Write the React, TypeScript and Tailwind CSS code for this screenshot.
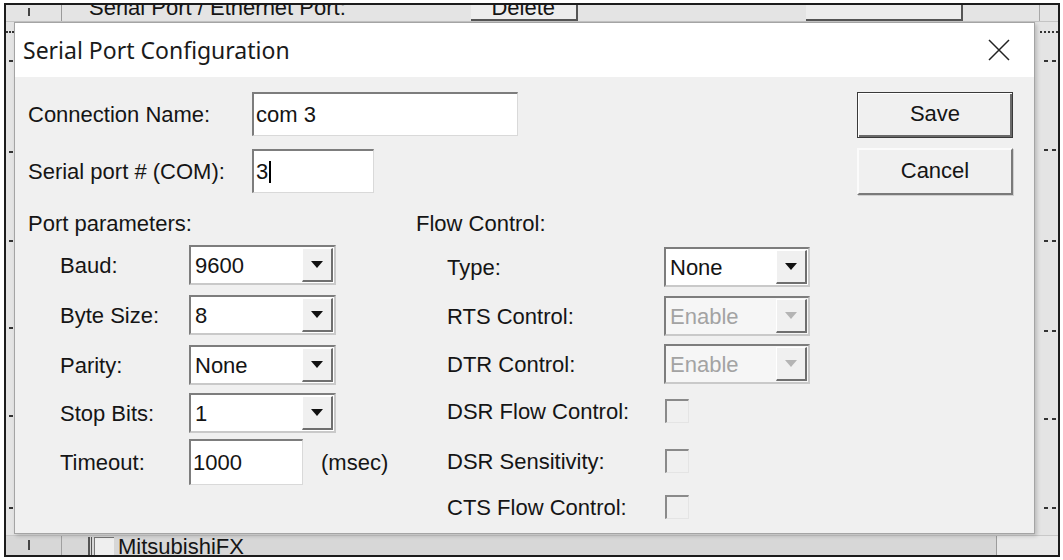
import React from "react";

// Sunken white edit box, classic Win32 look
function EditBox({ value, w, h = 44, caret }: { value: string; w: number; h?: number; caret?: boolean }) {
  return (
    <div
      className="flex items-center bg-white border-t-2 border-l-2 border-t-[#7d7d7d] border-l-[#7d7d7d] border-b border-r border-b-[#d9d9d9] border-r-[#d9d9d9] pl-[2px]"
      style={{ width: w, height: h }}
    >
      <span className="text-[22px] leading-none text-[#141414]">{value}</span>
      {caret && <span className="ml-[1px] inline-block h-[22px] w-[2px] bg-black" />}
    </div>
  );
}

function Combo({ value, w = 147, disabled }: { value: string; w?: number; disabled?: boolean }) {
  return (
    <div
      className={
        "flex h-[40px] border-t-2 border-l-2 border-t-[#7d7d7d] border-l-[#7d7d7d] border-b-2 border-r-2 border-b-[#c9c9c9] border-r-[#c9c9c9] " +
        (disabled ? "bg-[#f6f6f6]" : "bg-white")
      }
      style={{ width: w }}
    >
      <div className={"flex flex-1 items-center pl-[4px] text-[22px] " + (disabled ? "text-[#a3a3a3]" : "text-[#141414]")}>
        {value}
      </div>
      <div className="my-[1px] mr-[1px] flex w-[31px] items-center justify-center bg-[#f0f0f0] border-t border-l border-t-white border-l-white border-b-2 border-r-2 border-b-[#6f6f6f] border-r-[#6f6f6f]">
        <span
          className={
            "inline-block h-0 w-0 border-x-[6px] border-t-[7px] border-x-transparent " +
            (disabled ? "border-t-[#b4b4b4]" : "border-t-[#111]")
          }
        />
      </div>
    </div>
  );
}

function Check() {
  return (
    <div className="h-[24px] w-[24px] border-t-2 border-l-2 border-t-[#8a8a8a] border-l-[#8a8a8a] border-b border-r border-b-[#e4e4e4] border-r-[#e4e4e4] bg-[#f0f0f0]" />
  );
}

const leftTicks = [60, 151, 240, 327, 415, 507];
const rightTicks = [60, 149, 240, 330, 418, 507];

export default function App() {
  return (
    <div className="h-[560px] w-[1063px] bg-white pl-[4px] pt-[3px] font-['Liberation_Sans',Arial,sans-serif] text-[#151515]">
      <div className="relative h-[554px] w-[1056px] overflow-hidden border-2 border-[#1c1c1c] bg-[#e4e4e4]">
        {/* the host window behind the dialog */}
        <div className="flex h-full flex-col">
          <div className="flex h-[17px] overflow-hidden border-b border-[#c4c4c4]">
            <div className="flex h-full w-[56px] justify-center border-r border-[#9a9a9a] pr-[10px]">
              <span className="mt-[3px] h-[8px] w-[2px] bg-[#444]" />
            </div>
            <div className="ml-[27px] -mt-[10px] text-[22px] leading-[26px] whitespace-nowrap">Serial Port / Ethernet Port:</div>
            <div className="ml-[125px] flex h-[16px] w-[107px] items-end justify-center overflow-hidden border-b-2 border-r-2 border-b-[#555] border-r-[#555] bg-[#ededed]">
              <span className="-mb-[2px] text-[22px] leading-[26px]">Delete</span>
            </div>
            <div className="ml-[228px] h-[16px] w-[157px] border-b-2 border-r-2 border-b-[#555] border-r-[#555] bg-[#ededed]" />
            <div className="ml-[76px] h-full border-l border-[#a8a8a8]" />
          </div>
          <div className="flex-1" />
          <div className="flex h-[20px] border-t border-[#c8c8c8]">
            <div className="flex flex-1 items-end bg-[#d7d7d7]">
              <div className="flex h-full w-[56px] justify-center border-r border-[#a0a0a0] pr-[10px]">
                <span className="mt-[4px] h-[10px] w-[2px] bg-[#444]" />
              </div>
              <div className="ml-[26px] h-[18px] w-[4px] border-l-2 border-r border-[#555]" />
              <div className="ml-[2px] h-[18px] w-[20px] border-t border-l border-[#777] bg-[#efefef]" />
              <span className="ml-[4px] text-[22px] leading-[20px] -mb-[2px]">MitsubishiFX</span>
            </div>
            <div className="w-[62px] border-l border-[#9c9c9c] bg-[#e8e8e8]" />
          </div>
        </div>

        {/* scale ticks peeking out at the sides */}
        {leftTicks.map((y) => (
          <div key={"l" + y} className="absolute left-[3px] h-[2px] w-[4px] bg-[#333]" style={{ top: y - 5 }} />
        ))}
        {rightTicks.map((y) => (
          <div key={"r" + y} className="absolute right-[2px] flex gap-[4px]" style={{ top: y - 5 }}>
            <span className="h-[2px] w-[4px] bg-[#333]" />
            <span className="h-[2px] w-[4px] bg-[#333]" />
          </div>
        ))}
        <div className="absolute right-0 top-[26px] w-[18px] border-t-2 border-dotted border-[#333]" />
        <div className="absolute left-0 top-[26px] w-[8px] border-t-2 border-dotted border-[#333]" />

        {/* the dialog */}
        <div className="absolute left-[8px] top-[17px] flex h-[512px] w-[1021px] flex-col border border-[#a4a4a4] bg-[#f0f0f0] shadow-[2px_2px_4px_rgba(0,0,0,0.18)]">
          <div className="flex h-[54px] items-center justify-between bg-white pl-[8px] pr-[24px]">
            <span className="font-['Noto_Sans',sans-serif] text-[23px] text-[#1a1a1a]">Serial Port Configuration</span>
            <svg width="22" height="22" viewBox="0 0 22 22">
              <path d="M1 1 L21 21 M21 1 L1 21" stroke="#222" strokeWidth="1.5" fill="none" />
            </svg>
          </div>

          <div className="flex justify-between pl-[13px] pr-[21px] pt-[15px]">
            <div className="flex flex-col">
              <div className="flex h-[44px] items-center">
                <span className="w-[224px] text-[22px]">Connection Name:</span>
                <EditBox value="com 3" w={266} />
              </div>
              <div className="mt-[13px] flex h-[44px] items-center">
                <span className="w-[224px] text-[22px]">Serial port # (COM):</span>
                <EditBox value="3" w={122} caret />
              </div>

              <div className="mt-[18px] flex text-[22px]">
                <div className="w-[388px]">
                  <div className="h-[26px] leading-[26px]">Port parameters:</div>
                  <div className="mt-[8px] flex flex-col pl-[32px]">
                    <div className="flex h-[40px] items-center">
                      <span className="w-[129px]">Baud:</span>
                      <Combo value="9600" />
                    </div>
                    <div className="mt-[10px] flex h-[40px] items-center">
                      <span className="w-[129px]">Byte Size:</span>
                      <Combo value="8" />
                    </div>
                    <div className="mt-[10px] flex h-[40px] items-center">
                      <span className="w-[129px]">Parity:</span>
                      <Combo value="None" />
                    </div>
                    <div className="mt-[8px] flex h-[40px] items-center">
                      <span className="w-[129px]">Stop Bits:</span>
                      <Combo value="1" />
                    </div>
                    <div className="mt-[6px] flex h-[46px] items-center">
                      <span className="w-[129px]">Timeout:</span>
                      <EditBox value="1000" w={114} h={46} />
                      <span className="ml-[18px]">(msec)</span>
                    </div>
                  </div>
                </div>

                <div>
                  <div className="h-[26px] leading-[26px]">Flow Control:</div>
                  <div className="mt-[10px] flex flex-col pl-[31px]">
                    <div className="flex h-[40px] items-center">
                      <span className="w-[217px]">Type:</span>
                      <Combo value="None" w={146} />
                    </div>
                    <div className="mt-[9px] flex h-[40px] items-center">
                      <span className="w-[217px]">RTS Control:</span>
                      <Combo value="Enable" w={146} disabled />
                    </div>
                    <div className="mt-[8px] flex h-[40px] items-center">
                      <span className="w-[217px]">DTR Control:</span>
                      <Combo value="Enable" w={146} disabled />
                    </div>
                    <div className="mt-[7px] flex h-[40px] items-center">
                      <span className="w-[218px]">DSR Flow Control:</span>
                      <Check />
                    </div>
                    <div className="mt-[10px] flex h-[40px] items-center">
                      <span className="w-[218px]">DSR Sensitivity:</span>
                      <Check />
                    </div>
                    <div className="mt-[6px] flex h-[40px] items-center">
                      <span className="w-[218px]">CTS Flow Control:</span>
                      <Check />
                    </div>
                  </div>
                </div>
              </div>
            </div>

            <div className="flex flex-col">
              <button className="flex h-[46px] w-[156px] items-center justify-center border border-[#3a3a3a] bg-[#f0f0f0] pb-[4px] text-[22px] shadow-[inset_1px_1px_0_#fff,inset_-2px_-2px_0_#6a6a6a]">
                Save
              </button>
              <button className="mt-[10px] flex h-[47px] w-[156px] items-center justify-center border-t-2 border-l-2 border-t-[#fbfbfb] border-l-[#fbfbfb] border-b-2 border-r-2 border-b-[#7a7a7a] border-r-[#7a7a7a] bg-[#f0f0f0] pb-[2px] text-[22px] shadow-[1px_1px_0_#cfcfcf]">
                Cancel
              </button>
            </div>
          </div>
        </div>
      </div>
    </div>
  );
}
